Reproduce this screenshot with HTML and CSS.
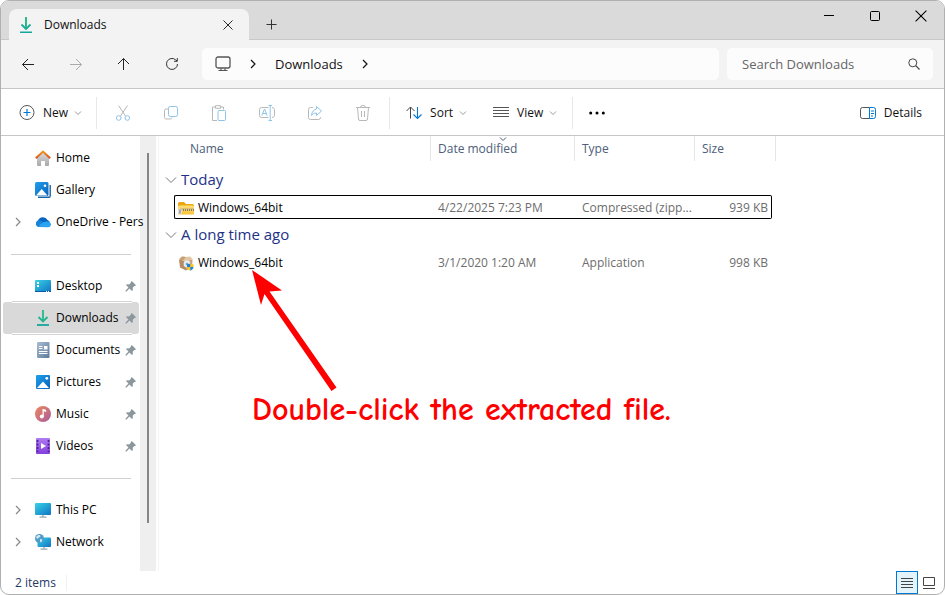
FILE: index.html
```html
<!DOCTYPE html>
<html lang="en">
<head>
<meta charset="utf-8">
<title>Downloads</title>
<meta name="viewport" content="width=device-width, initial-scale=1">
<link rel="stylesheet" href="styles.css">
</head>
<body>
<svg class="defs" aria-hidden="true">
  <defs>
    <linearGradient id="g-green" x1="0" y1="0" x2="0" y2="1"><stop offset="0" stop-color="#33c481"/><stop offset="1" stop-color="#0fa5a0"/></linearGradient>
    <linearGradient id="g-blue" x1="0" y1="0" x2="1" y2="1"><stop offset="0" stop-color="#1ea0ee"/><stop offset="1" stop-color="#0a62b8"/></linearGradient>
    <linearGradient id="g-cyan" x1="0" y1="0" x2="1" y2="1"><stop offset="0" stop-color="#37d3e6"/><stop offset="1" stop-color="#1173c4"/></linearGradient>
    <linearGradient id="g-wall" x1="0" y1="0" x2="0" y2="1"><stop offset="0" stop-color="#dcdcdc"/><stop offset="1" stop-color="#a9a9a9"/></linearGradient>
    <linearGradient id="g-roof" x1="0" y1="0" x2="0" y2="1"><stop offset="0" stop-color="#f5921e"/><stop offset="1" stop-color="#d9501c"/></linearGradient>
    <linearGradient id="g-doc" x1="0" y1="0" x2="1" y2="1"><stop offset="0" stop-color="#a9bdd3"/><stop offset="1" stop-color="#5d7a9b"/></linearGradient>
    <linearGradient id="g-music" x1="0" y1="0" x2="1" y2="1"><stop offset="0" stop-color="#f0875a"/><stop offset="1" stop-color="#a85c9e"/></linearGradient>
    <linearGradient id="g-video" x1="0" y1="0" x2="0" y2="1"><stop offset="0" stop-color="#b07af2"/><stop offset="1" stop-color="#8240dc"/></linearGradient>
    <linearGradient id="g-folder" x1="0" y1="0" x2="0" y2="1"><stop offset="0" stop-color="#ffe07e"/><stop offset="1" stop-color="#f8c234"/></linearGradient>
    <symbol id="download" viewBox="0 0 16 18"><path d="M8 1v12M3.500 8.500 8 13l4.500-4.500" fill="none" stroke="url(#g-green)" stroke-width="1.800"/><path d="M8 1.500v11" stroke="#27b98c" stroke-width="1.800"/><path d="M2 16.200h12" stroke="#12a89b" stroke-width="1.600"/></symbol>
    <symbol id="pin" viewBox="0 0 12 12"><path d="M6.800 1 11 5.200l-1 .9-.6-.1-1.700 1.800.2 2.200-.9.900-2.500-2.500L1.500 11.500l-1-.1.100-1L3.500 7.500 1 5l.9-.8 2.200.2L6 2.600l-.1-.7z" fill="#8b979e"/></symbol>
    <symbol id="right" viewBox="0 0 8 10"><path d="M2 1l4 4-4 4" fill="none" stroke="currentColor" stroke-width="1.200"/></symbol>
    <symbol id="down" viewBox="0 0 8 6"><path d="M1 1.500l3 3 3-3" fill="none" stroke="currentColor"/></symbol>
    <symbol id="close" viewBox="0 0 10 10"><path d="M.500.500l9 9M9.500.500l-9 9" fill="none" stroke="currentColor" stroke-width=".9"/></symbol>
  </defs>
</svg>
<div class="window">
  <header class="titlebar">
    <div class="tab">
      <svg class="i-dl"><use href="#download"/></svg>
      <span class="tab-title">Downloads</span>
      <button class="plain" aria-label="Close tab"><svg class="i10"><use href="#close"/></svg></button>
    </div>
    <button class="plain new-tab" aria-label="New tab"><svg class="i12" viewBox="0 0 12 12"><path d="M5.500 .5v10M.5 5.500h10" stroke="#333"/></svg></button>
    <div class="window-buttons">
      <button class="plain" aria-label="Minimize"><svg class="i12" viewBox="0 0 12 12"><path d="M1 5.500h10" stroke="#000"/></svg></button>
      <button class="plain" aria-label="Maximize"><svg class="i12" viewBox="0 0 12 12"><rect x="1.500" y="1.500" width="9" height="9" rx="1" fill="none" stroke="#000"/></svg></button>
      <button class="plain" aria-label="Close"><svg class="i12"><use href="#close"/></svg></button>
    </div>
  </header>

  <div class="navbar">
    <button class="plain nav-button" aria-label="Back"><svg class="i14" viewBox="0 0 14 14"><path d="M13 7.500H1.500M7 2 1.500 7.500 7 13" fill="none" stroke="#222"/></svg></button>
    <button class="plain nav-button" aria-label="Forward"><svg class="i14" viewBox="0 0 14 14"><path d="M1 7.500h11.500M7 2 12.500 7.500 7 13" fill="none" stroke="#aaa"/></svg></button>
    <button class="plain nav-button" aria-label="Up"><svg class="i14" viewBox="0 0 14 14"><path d="M6.500 13V1.500M1 7 6.500 1.500 12 7" fill="none" stroke="#222"/></svg></button>
    <button class="plain nav-button" aria-label="Refresh"><svg class="i14" viewBox="0 0 14 14"><path d="M12.500 7a5.500 5.500 0 1 1-2-4.300L12 4M12.300 1v3.300H9" fill="none" stroke="#333"/></svg></button>
    <div class="address">
      <svg class="i16" viewBox="0 0 16 16"><rect x="1" y="1" width="14" height="11" rx="2" fill="none" stroke="#555" stroke-width="1.300"/><path d="M3.500 14.500h9M6 12.500v2M10 12.500v2" stroke="#555" stroke-width="1.200"/></svg>
      <svg class="i-right"><use href="#right"/></svg>
      <span>Downloads</span>
      <svg class="i-right"><use href="#right"/></svg>
    </div>
    <label class="search">
      <input type="text" placeholder="Search Downloads" aria-label="Search Downloads">
      <svg class="i12" viewBox="0 0 12 12"><circle cx="4.800" cy="4.800" r="4" fill="none" stroke="#444"/><path d="M7.700 7.700l3.800 3.800" stroke="#444" stroke-width="1.200"/></svg>
    </label>
  </div>

  <div class="commands">
    <button class="plain command new"><svg class="i16" viewBox="0 0 16 16"><circle cx="8" cy="7.500" r="7" fill="none" stroke="#555"/><path d="M8 4v7M4.500 7.500h7" stroke="#0078d4" stroke-width="1.200"/></svg>New<svg class="i-down"><use href="#down"/></svg></button>
    <div class="tools">
      <button class="plain" disabled aria-label="Cut"><svg class="i16" viewBox="0 0 16 16" fill="none"><path d="M3.500.500 10.500 11M12.500.500 5.500 11" stroke="#b8b8b8"/><circle cx="3.700" cy="13" r="2.300" stroke="#8fc4ea"/><circle cx="12.300" cy="13" r="2.300" stroke="#8fc4ea"/></svg></button>
      <button class="plain" disabled aria-label="Copy"><svg class="i16" viewBox="0 0 16 16" fill="none"><path d="M5 4H3.200A1.700 1.700 0 0 0 1.500 5.700v6.600A1.700 1.700 0 0 0 3.200 14h4A2 2 0 0 0 9 12.500" stroke="#b8b8b8"/><rect x="5.500" y="1.500" width="9" height="10" rx="1.800" stroke="#8fc4ea"/></svg></button>
      <button class="plain" disabled aria-label="Paste"><svg class="i16" viewBox="0 0 16 16" fill="none"><path d="M5 2H1.500v13.500H6M9.500 2H12.500v2.500M4.500.700h5v2.600h-5z" stroke="#b8b8b8"/><rect x="7" y="5.500" width="7.500" height="10" rx="1" stroke="#8fc4ea"/></svg></button>
      <button class="plain" disabled aria-label="Rename"><svg class="i16" viewBox="0 0 16 16" fill="none"><path d="M9.500 2.500H2.500a2 2 0 0 0-2 2v6a2 2 0 0 0 2 2h7M13 2.500a2.500 2.500 0 0 1 2.500 2v6a2.500 2.500 0 0 1-2.500 2" stroke="#b8b8b8"/><path d="M11.200.500v15M9.500.500h3.500M9.500 15.500h3.500M2.800 10.700 5.500 4l2.700 6.700M3.700 8.500h3.600" stroke="#8fc4ea"/></svg></button>
      <button class="plain" disabled aria-label="Share"><svg class="i16" viewBox="0 0 16 16" fill="none"><path d="M6 2.500H3.500a2 2 0 0 0-2 2v8a2 2 0 0 0 2 2h8a2 2 0 0 0 2-2V12" stroke="#b8b8b8"/><path d="M9.500 1.500 14.500 6l-5 4.500V8C7 8 5.500 9 4.500 10.500 4.800 6.500 7 4.500 9.500 4z" stroke="#8fc4ea"/></svg></button>
      <button class="plain" disabled aria-label="Delete"><svg class="i16" viewBox="0 0 16 16" fill="none"><path d="M1 2.500h14M5.500 2.300a2.500 1.800 0 0 1 5 0M2.500 2.500l1 11.500a1.500 1.500 0 0 0 1.500 1.500h6a1.500 1.500 0 0 0 1.500-1.500l1-11.500M6.500 6v6M9.500 6v6" stroke="#b8b8b8"/></svg></button>
    </div>
    <button class="plain command sort"><svg class="i16" viewBox="0 0 16 16" fill="none"><path d="M4.500 13.500V2M.500 6l4-4 4 4" stroke="#444"/><path d="M11.500 2v11.500M7.500 9.500l4 4 4-4" stroke="#0078d4" stroke-width="1.100"/></svg>Sort<svg class="i-down"><use href="#down"/></svg></button>
    <button class="plain command view"><svg class="i16" viewBox="0 0 16 16"><path d="M0 2.500h16M0 5.500h16M0 8.500h16M0 11.500h16" stroke="#555"/></svg>View<svg class="i-down"><use href="#down"/></svg></button>
    <button class="plain more" aria-label="See more"><svg class="i16" viewBox="0 0 16 16"><circle cx="1.700" cy="8" r="1.500"/><circle cx="8" cy="8" r="1.500"/><circle cx="14.300" cy="8" r="1.500"/></svg></button>
    <button class="plain command details"><svg class="i16" viewBox="0 0 16 16" fill="none"><path d="M9.500 2.500H2.500a2 2 0 0 0-2 2v7a2 2 0 0 0 2 2h7" stroke="#555"/><path d="M9.500 2.500h4a2 2 0 0 1 2 2v7a2 2 0 0 1-2 2h-4zM11 6h3M11 8.500h3M11 11h2" stroke="#0078d4"/></svg>Details</button>
  </div>

  <div class="content">
    <nav class="sidebar" aria-label="Folders">
      <a href="#" class="place"><svg class="i16" viewBox="0 0 16 16"><path d="M2 7.500 8 2l6 5.500V15a1 1 0 0 1-1 1h-3v-5H6v5H3a1 1 0 0 1-1-1z" fill="url(#g-wall)"/><path d="M.800 8.300 8 1.600l7.200 6.700" fill="none" stroke="url(#g-roof)" stroke-width="2"/></svg><span>Home</span></a>
      <a href="#" class="place"><svg class="i16" viewBox="0 0 16 16"><path d="M15.200 3v11a1.300 1.300 0 0 1-1.300 1.300H3" fill="none" stroke="#1464a8" stroke-width="1.400"/><rect width="13.500" height="14" rx="1.500" fill="url(#g-blue)"/><path d="M1 13.500 6.700 7l5.800 6.500z" fill="#fff"/><circle cx="10" cy="3.800" r="1.300" fill="#fff"/></svg><span>Gallery</span></a>
      <a href="#" class="place"><svg class="expand"><use href="#right"/></svg><svg class="i16" viewBox="0 0 16 16"><path d="M3.500 13A3.500 3.500 0 0 1 3 6.500 5.200 5.200 0 0 1 12.500 6 3.700 3.700 0 0 1 12.500 13z" fill="#0864c0"/><path d="M4 13a3.500 3.500 0 0 1-1-6.500l2-.3L15 11.500A3 3 0 0 1 12.500 13z" fill="#1683dc"/><path d="M3.500 13C5 9.500 8 8 11.500 7.500c3-.5 4.500 1.500 4.500 3S14.500 13.200 13 13.200z" fill="#2ca3f0"/></svg><span>OneDrive - Pers</span></a>
      <hr>
      <a href="#" class="place"><svg class="i16" viewBox="0 0 16 16"><rect y="2" width="16" height="12" rx="1" fill="url(#g-cyan)"/><path d="M2 4h2v2H2zM2 7h2v2H2z" fill="#fff"/><path d="M0 13.500h16" stroke="#0c5ba0"/><path d="M11 13.500h1M13 13.500h1" stroke="#fff"/></svg><span>Desktop</span><svg class="pin"><use href="#pin"/></svg></a>
      <a href="#" class="place current" aria-current="page"><svg class="i16" viewBox="0 0 16 16"><path d="M8 0v11M3.500 7 8 11.500 12.500 7" fill="none" stroke="#22b78f" stroke-width="1.800"/><path d="M2 15h12" stroke="#12a89b" stroke-width="1.800"/></svg><span>Downloads</span><svg class="pin"><use href="#pin"/></svg></a>
      <a href="#" class="place"><svg class="i16" viewBox="0 0 16 16"><rect x="2" width="12.500" height="16" rx="1" fill="url(#g-doc)"/><path d="M4 4.500h3.500M4 6.500h3.500M4 9.500h8.500M4 11.500h8.500" stroke="#fff"/><path d="M9 4h3.500v3.500H9z" fill="#fff"/></svg><span>Documents</span><svg class="pin"><use href="#pin"/></svg></a>
      <a href="#" class="place"><svg class="i16" viewBox="0 0 16 16"><rect x="1" y="1" width="14" height="14" rx="1" fill="url(#g-blue)"/><path d="M2 14 8 7.500l6 6.500z" fill="#fff"/><circle cx="11.800" cy="4.300" r="1.400" fill="#fff"/></svg><span>Pictures</span><svg class="pin"><use href="#pin"/></svg></a>
      <a href="#" class="place"><svg class="i16" viewBox="0 0 16 16"><circle cx="8" cy="8" r="8" fill="url(#g-music)"/><circle cx="6.800" cy="10.500" r="2" fill="#fff"/><path d="M7.500 10.500V3h1.300l2.400 1v2L8.800 5.200v5.300z" fill="#fff"/></svg><span>Music</span><svg class="pin"><use href="#pin"/></svg></a>
      <a href="#" class="place"><svg class="i16" viewBox="0 0 16 16"><rect x="1" width="14" height="16" rx="1" fill="url(#g-video)"/><path d="M2.500 2v12M13.500 2v12" stroke="#4b2089" stroke-width="1.600" stroke-dasharray="2 1.500"/><path d="M6 5l5 3-5 3z" fill="#fff"/></svg><span>Videos</span><svg class="pin"><use href="#pin"/></svg></a>
      <hr>
      <a href="#" class="place"><svg class="expand"><use href="#right"/></svg><svg class="i16" viewBox="0 0 16 16"><rect y="1" width="16" height="12" rx="1" fill="url(#g-cyan)"/><path d="M8 13v2M4.500 15.200h7" stroke="#9aa7b0" stroke-width="1.300"/></svg><span>This PC</span></a>
      <a href="#" class="place"><svg class="expand"><use href="#right"/></svg><svg class="i16" viewBox="0 0 16 16"><rect x="2.500" y="3.500" width="13.500" height="9.500" rx="1" fill="url(#g-cyan)"/><path d="M9 13v2M5.500 15.200h7" stroke="#9aa7b0" stroke-width="1.300"/><circle cx="4.500" cy="4.500" r="4.500" fill="#4f9cc6"/><path d="M1 3c1.500-2 3-2.300 4-2l.5 1.500L3.500 4 2 5zM5 5l2.500.500L6.500 8 5 8.300z" fill="#cfe6f1"/></svg><span>Network</span></a>
    </nav>
    <div class="scrollbar" aria-hidden="true"><div class="thumb"></div></div>
    <main class="files">
      <table>
        <colgroup><col class="c-name"><col class="c-date"><col class="c-type"><col class="c-size"><col class="c-end"></colgroup>
        <thead>
          <tr><th scope="col"><div>Name</div></th><th scope="col"><div>Date modified<svg class="sorted"><use href="#down"/></svg></div></th><th scope="col"><div>Type</div></th><th scope="col" colspan="2"><div>Size</div></th></tr>
        </thead>
        <tbody>
          <tr class="group"><th colspan="5" scope="rowgroup"><svg class="fold" viewBox="0 0 12 8"><path d="M1 1.500l5 5 5-5" fill="none" stroke="#777"/></svg>Today</th></tr>
          <tr class="file focused"><td><svg class="i16" viewBox="0 0 16 16"><path d="M0 3.500A1.500 1.500 0 0 1 1.500 2H6l2 2h6.500A1.500 1.500 0 0 1 16 5.500V12H0z" fill="#e9a70f"/><rect y="5.500" width="16" height="9" rx="1.300" fill="url(#g-folder)"/><path d="M3 10h13" stroke="#7f7b70" stroke-width="2" stroke-dasharray="1 1"/><path d="M2 8.900h14" stroke="#a79c7e" stroke-width=".6"/><rect x=".5" y="9" width="3" height="5" rx="1" fill="#aaa" stroke="#eee" stroke-width=".7"/></svg>Windows_64bit</td><td>4/22/2025 7:23 PM</td><td>Compressed (zipp...</td><td>939 KB</td><td></td></tr>
          <tr class="group"><th colspan="5" scope="rowgroup"><svg class="fold" viewBox="0 0 12 8"><path d="M1 1.500l5 5 5-5" fill="none" stroke="#777"/></svg>A long time ago</th></tr>
          <tr class="file"><td><svg class="i16" viewBox="0 0 16 16"><path d="M1 4.500 8 6v9.500L2 12.500z" fill="#b58c64"/><path d="M8 6l6.500-1.500L14 12.500 8 15.500z" fill="#c9a27b"/><path d="M1 4.500 4 1.500 8 2l4-.5 3 3L8 6z" fill="#e3c5a2"/><path d="M1 4.500 4 1.500 8 2 5 5.300z" fill="#c79f76"/><circle cx="9" cy="9" r="3.400" fill="#e9edf1"/><circle cx="9" cy="9" r="1.300" fill="#6aa5c9"/><path d="M9 9.500 12.300 8.500v3.500H9z" fill="#1d7fd4"/><path d="M12.300 8.500l3.200 1V12H12.300z" fill="#f8c41c"/><path d="M9 12h3.300v3.700C10.300 15 9.200 14 9 12z" fill="#f8c41c"/><path d="M12.300 12h3.200c-.2 2-1.500 3-3.200 3.700z" fill="#1d7fd4"/></svg>Windows_64bit</td><td>3/1/2020 1:20 AM</td><td>Application</td><td>998 KB</td><td></td></tr>
        </tbody>
      </table>
      <div class="callout">
        <svg class="arrow" viewBox="0 0 86 122"><path d="M0 0 30 20.500 17.500 21.500 84.500 117.500 79.500 121 12.500 24 9 35z" fill="#f00"/></svg>
        <p>Double-click the extracted file.</p>
      </div>
    </main>
  </div>

  <footer class="status">
    <span class="count">2 items</span>
    <button class="plain mode active" aria-label="Details view"><svg class="i12" viewBox="0 0 12 12"><path d="M0 1.500h12M0 4.500h12M0 7.500h12M0 10.500h12" stroke="#444"/></svg></button>
    <button class="plain mode" aria-label="Large icons view"><svg class="i12" viewBox="0 0 12 12"><path d="M.500.500h11v8H.500zM0 11.500h12" fill="none" stroke="#444"/></svg></button>
  </footer>
</div>
</body>
</html>
```
FILE: styles.css
```css
* { box-sizing: border-box; }

body {
  margin: 0;
  background: #fff;
  color: #111;
  font-family: "Segoe UI", "Open Sans", "Noto Sans", sans-serif;
  font-size: 12px;
  line-height: 16px;
}

svg { display: block; flex: none; }
.defs { position: absolute; width: 0; height: 0; }
.i10 { width: 10px; height: 10px; }
.i12 { width: 12px; height: 12px; }
.i14 { width: 14px; height: 14px; }
.i16 { width: 16px; height: 16px; }
.i-right { width: 8px; height: 10px; }
.i-down { width: 8px; height: 6px; color: #999; }
.i-dl { width: 16px; height: 18px; }

.plain {
  display: flex;
  align-items: center;
  justify-content: center;
  padding: 0;
  border: 0;
  background: none;
  color: inherit;
  font: inherit;
}

.window {
  display: flex;
  flex-direction: column;
  min-height: 100vh;
  overflow: hidden;
  border: 1px solid #b0b0b0;
  border-radius: 9px;
  background: #fff;
}

/* Title bar and tab */
.titlebar {
  display: flex;
  height: 39px;
  padding-left: 8px;
  background: #dadada;
  box-shadow: inset 0 -1px #c8c8c8;
}
.tab {
  display: flex;
  align-items: center;
  width: 240px;
  margin-top: 8px;
  padding: 0 16px 0 9px;
  border-radius: 8px 8px 0 0;
  background: #f3f3f3;
}
.tab-title {
  flex: 1;
  padding-left: 10px;
  font-weight: 500;
}
.new-tab { width: 46px; padding-top: 8px; }
.window-buttons {
  display: flex;
  height: 29px;
  margin-left: auto;
}
.window-buttons .plain { width: 46px; color: #000; }

/* Navigation */
.navbar {
  display: flex;
  align-items: center;
  height: 49px;
  padding: 0 11px 0 3px;
  border-bottom: 1px solid #c6c6c6;
  background: #f3f3f3;
}
.nav-button { width: 48px; height: 32px; }
.address, .search {
  display: flex;
  align-items: center;
  height: 32px;
  border-radius: 5px;
  background: #fcfcfc;
  font-size: 13px;
}
.address {
  flex: 1;
  gap: 18px;
  margin-left: 6px;
  padding-left: 13px;
}
.search {
  width: 206px;
  margin-left: 8px;
  padding: 0 13px 0 15px;
}
.search input {
  flex: 1;
  min-width: 0;
  padding: 0;
  border: 0;
  outline: 0;
  background: none;
  font: inherit;
}
.search input::placeholder { color: #666; opacity: 1; }

/* Commands */
.commands {
  display: flex;
  align-items: center;
  height: 47px;
  padding-top: 2px;
  border-bottom: 1px solid #c6c6c6;
}
.command { gap: 8px; }
.command .i-down { margin-left: -2px; }
.new { padding: 0 14px 0 18px; }
.tools {
  display: flex;
  gap: 32px;
  padding: 8px 18px;
  border: solid #e8e8e8;
  border-width: 0 1px;
}
.tools .plain { height: 16px; }
.sort { padding: 0 26px 0 16px; }
.view { padding-right: 15px; }
.more {
  height: 32px;
  padding: 0 16px;
  border-left: 1px solid #e8e8e8;
}
.details { margin-left: auto; padding-right: 22px; }

/* Sidebar */
.content { display: flex; flex: 1; }
.sidebar {
  position: relative;
  z-index: 1;
  width: 139px;
  padding: 6px 1px 13px 2px;
}
.sidebar hr {
  height: 1px;
  margin: 16px 8px 15px;
  border: 0;
  background: #d0d0d0;
}
.place {
  position: relative;
  display: flex;
  align-items: center;
  gap: 5px;
  height: 32px;
  padding-left: 32px;
  border-radius: 3px;
  color: #000;
  text-decoration: none;
  white-space: nowrap;
}
.place .expand {
  position: absolute;
  left: 11px;
  width: 8px;
  height: 10px;
  color: #888;
}
.pin {
  width: 12px;
  height: 12px;
  margin: 0 2px 0 auto;
}
.current { background: #d9d9d9; }
.current::before, .current::after {
  position: absolute;
  right: 7px;
  left: 9px;
  height: 1px;
  background: #d4d4d4;
  content: "";
}
.current::before { top: -1px; box-shadow: 0 1px #fff; }
.current::after { bottom: -1px; box-shadow: 0 -1px #fff; }
.scrollbar {
  width: 16px;
  padding: 17px 7px 48px;
  background: #efefef;
}
.thumb {
  width: 2px;
  height: 100%;
  background: #858585;
}

/* File list */
.files {
  position: relative;
  flex: 1;
  margin-left: 2px;
  padding-left: 15px;
  border-left: 1px solid #f5f5f5;
}
table {
  width: 602px;
  border-spacing: 0;
  table-layout: fixed;
}
.c-name { width: 257px; }
.c-date { width: 144px; }
.c-type { width: 120px; }
.c-size { width: 77px; }
.c-end { width: 4px; }
th, td {
  padding: 0;
  font-weight: 400;
  text-align: left;
  white-space: nowrap;
}
thead th {
  height: 28px;
  color: #4c607a;
  vertical-align: top;
}
thead div {
  position: relative;
  height: 25px;
  padding: 5px 0 0 7px;
  border-right: 1px solid #e5e5e5;
}
thead th:first-child div { padding-left: 16px; }
.sorted {
  position: absolute;
  top: 0;
  left: 68px;
  width: 8px;
  height: 6px;
}
.group th {
  height: 31px;
  padding-bottom: 2px;
  color: #1e3287;
  font-size: 15px;
}
.fold {
  display: inline-block;
  width: 12px;
  height: 8px;
  margin: 0 4px 1px -9px;
}
.file td {
  height: 24px;
  padding: 2px 0 0 7px;
  border: solid transparent;
  border-width: 1px 0;
  color: #6d6d6d;
}
.file td:first-child {
  padding-left: 3px;
  border-left-width: 1px;
  color: #000;
}
.file td:nth-child(4) {
  padding: 2px 3px 0 0;
  border-right-width: 1px;
  text-align: right;
}
.file td:last-child { padding: 0; border: 0; }
.file .i16 {
  display: inline-block;
  margin-right: 4px;
  vertical-align: -4px;
}
.focused td { border-color: #000; }
.focused td:first-child { border-radius: 2px 0 0 2px; }
.focused td:nth-child(4) { border-radius: 0 2px 2px 0; }

/* Note drawn over the file list */
.callout {
  position: absolute;
  top: 134px;
  left: 93px;
  color: #f00;
}
.arrow { width: 86px; height: 122px; }
.callout p {
  margin: 0;
  font-family: "Comic Sans MS", "Comic Neue", "DejaVu Sans", sans-serif;
  font-size: 32px;
  font-weight: 700;
  line-height: 36px;
  white-space: nowrap;
}

/* Status bar */
.status {
  display: flex;
  align-items: center;
  height: 23px;
  padding: 0 4px 0 14px;
}
.count {
  margin-right: auto;
  padding-right: 10px;
  border-right: 1px solid #f0f0f0;
  color: #1f3a63;
}
.mode {
  width: 22px;
  height: 23px;
  border: 1px solid transparent;
}
.mode.active {
  border-color: #0078d4;
  background: #e5f3fb;
}
```
